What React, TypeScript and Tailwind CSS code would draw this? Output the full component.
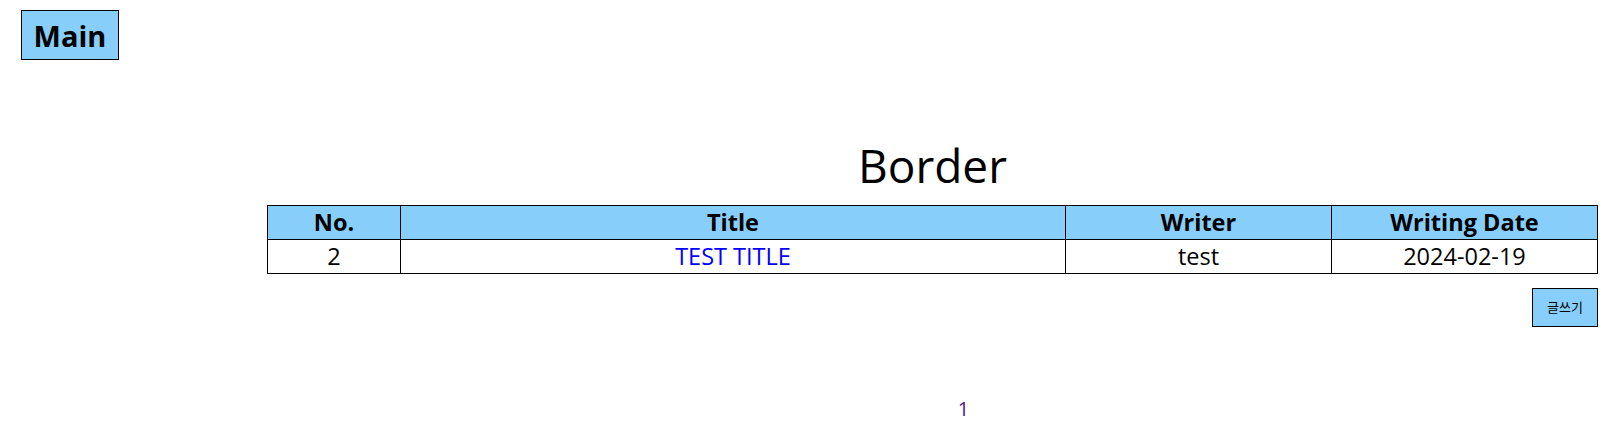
import React from "react";

export default function App() {
  const font = { fontFamily: '"Open Sans", "Noto Sans CJK KR", sans-serif' };
  return (
    <div className="bg-white w-[1623px] h-[426px] text-black" style={font}>
      <div className="pt-[10px] pl-[21px]">
        <button className="w-[98px] h-[50px] border border-black bg-[#87cefa] text-[29px] font-bold leading-none flex items-center justify-center">
          Main
        </button>
      </div>
      <div className="ml-[267px] w-[1331px]">
        <h1 className="mt-[76px] mb-[11px] text-center text-[46px] leading-[58px] font-normal">Border</h1>
        <table className="w-full border-collapse border border-black text-[23.5px] leading-[33px] text-center">
          <thead>
            <tr className="bg-[#87cefa]">
              <th className="border border-black w-[10%] font-bold p-0">No.</th>
              <th className="border border-black w-[50%] font-bold p-0">Title</th>
              <th className="border border-black w-[20%] font-bold p-0">Writer</th>
              <th className="border border-black w-[20%] font-bold p-0">Writing Date</th>
            </tr>
          </thead>
          <tbody>
            <tr>
              <td className="border border-black p-0">2</td>
              <td className="border border-black p-0">
                <a className="text-[#0000ff]">TEST TITLE</a>
              </td>
              <td className="border border-black p-0">test</td>
              <td className="border border-black p-0">2024-02-19</td>
            </tr>
          </tbody>
        </table>
        <div className="flex justify-end mt-[14px]">
          <button className="w-[66px] h-[39px] border border-black bg-[#87cefa] text-[13px]">글쓰기</button>
        </div>
        <div className="flex justify-center mt-[70px] pl-[62px]">
          <a className="text-[#551a8b] text-[20px] leading-[24px]">1</a>
        </div>
      </div>
    </div>
  );
}
